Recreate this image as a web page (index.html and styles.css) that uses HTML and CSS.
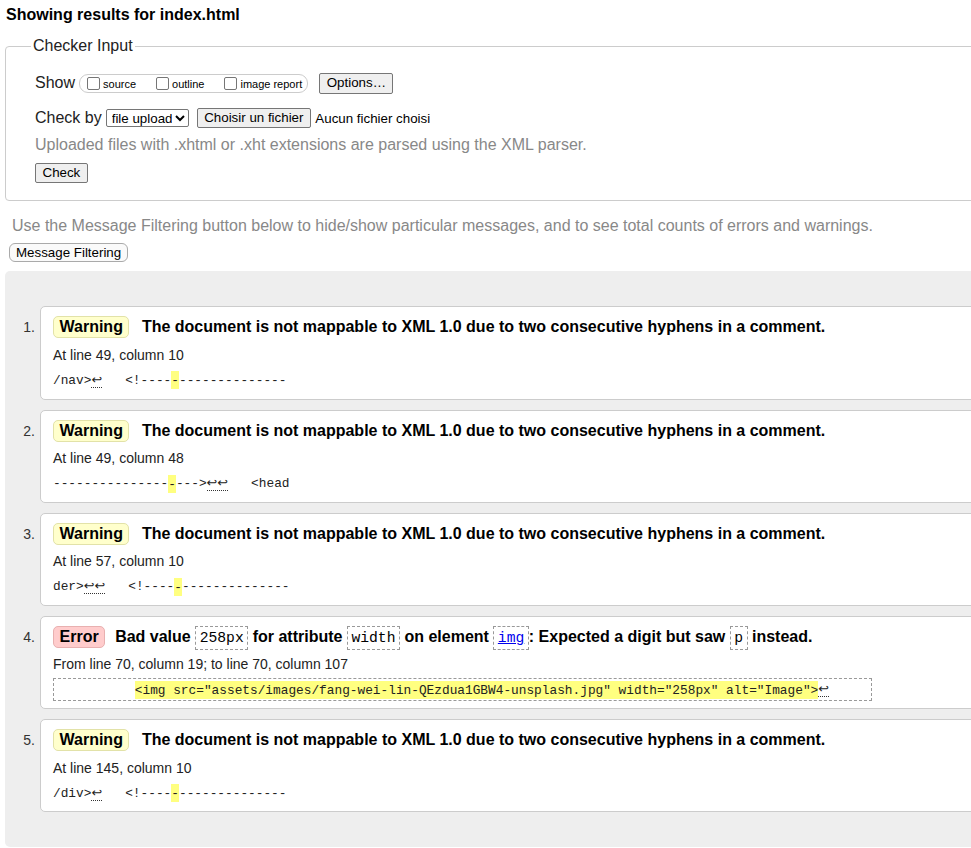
FILE: index.html
```html
<!DOCTYPE html>
<html lang="en">
<head>
<meta charset="utf-8">
<title>Showing results for index.html - Nu Html Checker</title>
<link rel="stylesheet" href="styles.css">
</head>
<body>
<div class="page">
  <h2 class="title">Showing results for index.html</h2>
  <form class="form">
    <fieldset class="input">
      <legend>Checker Input</legend>
      <div class="row row-show">
        <span class="lbl">Show</span>
        <span class="pill">
          <label class="cb"><input type="checkbox"><span>source</span></label>
          <label class="cb"><input type="checkbox"><span>outline</span></label>
          <label class="cb"><input type="checkbox"><span>image report</span></label>
        </span>
        <button type="button" class="btn opt">Options…</button>
      </div>
      <div class="row row-by">
        <span class="lbl">Check by</span>
        <select class="sel"><option>file upload</option></select>
        <button type="button" class="btn file">Choisir un fichier</button>
        <span class="nofile">Aucun fichier choisi</span>
      </div>
      <p class="hint">Uploaded files with .xhtml or .xht extensions are parsed using the XML parser.</p>
      <button type="button" class="btn check">Check</button>
    </fieldset>
  </form>
  <p class="hint filter-hint">Use the Message Filtering button below to hide/show particular messages, and to see total counts of errors and warnings.</p>
  <button type="button" class="filter-btn">Message Filtering</button>
  <div class="results">
    <ol class="msgs">
      <li class="item">
        <span class="num">1.</span>
        <div class="msg">
          <p class="head"><strong class="badge warn">Warning</strong>The document is not mappable to XML 1.0 due to two consecutive hyphens in a comment.</p>
          <p class="loc">At line 49, column 10</p>
          <div class="code">/nav&gt;<span class="lf">↩</span>   &lt;!----<mark>-</mark>--------------</div>
        </div>
      </li>
      <li class="item">
        <span class="num">2.</span>
        <div class="msg">
          <p class="head"><strong class="badge warn">Warning</strong>The document is not mappable to XML 1.0 due to two consecutive hyphens in a comment.</p>
          <p class="loc">At line 49, column 48</p>
          <div class="code">---------------<mark>-</mark>---&gt;<span class="lf">↩↩</span>   &lt;head</div>
        </div>
      </li>
      <li class="item">
        <span class="num">3.</span>
        <div class="msg">
          <p class="head"><strong class="badge warn">Warning</strong>The document is not mappable to XML 1.0 due to two consecutive hyphens in a comment.</p>
          <p class="loc">At line 57, column 10</p>
          <div class="code">der&gt;<span class="lf">↩↩</span>   &lt;!----<mark>-</mark>--------------</div>
        </div>
      </li>
      <li class="item">
        <span class="num">4.</span>
        <div class="msg">
          <p class="head"><strong class="badge err">Error</strong>Bad value <code class="ic">258px</code> for attribute <code class="ic">width</code> on element <code class="ic"><a href="#" class="elink">img</a></code>: Expected a digit but saw <code class="ic">p</code> instead.</p>
          <p class="loc">From line 70, column 19; to line 70, column 107</p>
          <div class="code"><span class="extract">          <mark>&lt;img src="assets/images/fang-wei-lin-QEzdua1GBW4-unsplash.jpg" width="258px" alt="Image"&gt;</mark><span class="lf">↩</span>     </span></div>
        </div>
      </li>
      <li class="item">
        <span class="num">5.</span>
        <div class="msg">
          <p class="head"><strong class="badge warn">Warning</strong>The document is not mappable to XML 1.0 due to two consecutive hyphens in a comment.</p>
          <p class="loc">At line 145, column 10</p>
          <div class="code">/div&gt;<span class="lf">↩</span>   &lt;!----<mark>-</mark>--------------</div>
        </div>
      </li>
    </ol>
  </div>
</div>
</body>
</html>
```

FILE: styles.css
```css
html {
  overflow: hidden;
}

body {
  margin: 0;
  font-family: "Liberation Sans", Arial, sans-serif;
  color: #000;
  background: #fff;
}

.page {
  width: 1040px;
  padding: 0 5px;
}

.title {
  margin: 6px 0 0;
  padding-left: 1px;
  font-size: 16px;
  line-height: normal;
  font-weight: bold;
}

.form {
  margin: 0;
}

.input {
  margin: 13px 0 0;
  padding: 0 0 17px 29px;
  border: 1px solid #ccc;
  border-radius: 4px;
  min-width: 0;
}

.input legend {
  padding: 0 2px;
  margin-left: -4px;
  font-size: 16px;
  line-height: normal;
  color: #222;
}

.row {
  display: flex;
  align-items: center;
}

.row-show {
  margin-top: 17.5px;
  height: 21px;
}

.row-by {
  margin-top: 14.5px;
  height: 20px;
}

.lbl {
  font-size: 16px;
  color: #222;
  margin-right: 4px;
}

.pill {
  display: inline-flex;
  align-items: center;
  height: 19px;
  box-sizing: border-box;
  padding: 0 5px 0 6.7px;
  border: 1px solid #ccc;
  border-radius: 9px;
}

.cb {
  display: inline-flex;
  align-items: center;
  font-size: 11px;
  color: #000;
}

.cb + .cb {
  margin-left: 19.7px;
}

.cb span {
  padding-top: 2px;
}

.cb input {
  appearance: none;
  -webkit-appearance: none;
  box-sizing: border-box;
  width: 13px;
  height: 13px;
  margin: 0 3.3px 0 0;
  border: 1px solid #767676;
  border-radius: 2px;
  background: #fff;
}

.btn {
  font-family: "Liberation Sans", Arial, sans-serif;
  font-size: 13.33px;
  line-height: 16px;
  padding: 1px 6.5px;
  border: 1px solid #767676;
  border-radius: 2px;
  background: #efefef;
  color: #000;
}

.opt {
  margin-left: 11px;
  padding-top: 1.5px;
  padding-bottom: 1.5px;
}

.sel {
  width: 83px;
  height: 18px;
  box-sizing: border-box;
  font-family: "Liberation Sans", Arial, sans-serif;
  font-size: 13.33px;
  padding: 0 0 0 1px;
  border: 1px solid #767676;
  border-radius: 2px;
  background: #fff;
  color: #000;
}

.file {
  margin-left: 8px;
}

.nofile {
  margin-left: 4.4px;
  font-size: 13.33px;
  color: #000;
}

.hint {
  font-size: 16px;
  line-height: normal;
  color: #888;
  margin: 8.3px 0 0;
}

.check {
  display: block;
  margin-top: 8.8px;
}

.filter-hint {
  margin: 15.8px 0 0 7px;
}

.filter-btn {
  display: block;
  margin: 7.8px 0 0 4px;
  font-family: "Liberation Sans", Arial, sans-serif;
  font-size: 13.33px;
  line-height: 17px;
  padding: 0 6px;
  border: 1px solid #aaa;
  border-radius: 6px;
  background: #fafafa;
  color: #000;
}

.results {
  margin-top: 9px;
  background: #eee;
  border-radius: 5px 0 0 5px;
  padding: 35.7px 0 35px;
}

.msgs {
  list-style: none;
  margin: 0;
  padding: 0;
}

.item {
  display: flex;
  align-items: baseline;
}

.item + .item {
  margin-top: 10px;
}

.num {
  flex: 0 0 35px;
  box-sizing: border-box;
  padding-right: 5px;
  text-align: right;
  font-size: 14px;
  color: #333;
}

.msg {
  flex: 1;
  background: #fff;
  border: 1px solid #ccc;
  border-radius: 5px;
  padding: 9px 12px 7.7px;
}

.head {
  margin: 0;
  font-size: 16px;
  font-weight: bold;
  line-height: 22px;
}

.badge {
  display: inline-block;
  line-height: 18px;
  padding: 1px 5.5px;
  border: 1px solid;
  border-radius: 5px;
  margin-right: 12.5px;
}

.warn {
  background: #ffffcc;
  border-color: #e2e2a8;
}

.err {
  background: #ffcccc;
  border-color: #e8b0b0;
  margin-right: 10px;
}

.ic {
  font-family: "Liberation Mono", "DejaVu Sans Mono", monospace;
  font-size: 14.7px;
  font-weight: normal;
  line-height: 16px;
  padding: 3px 3.5px;
  border: 1px dashed #999;
}

.elink {
  color: #00e;
  text-decoration: underline;
}

.loc {
  margin: 8.5px 0 0;
  font-size: 14px;
  line-height: 16px;
  color: #222;
}

.code {
  margin-top: 7px;
  font-family: "Liberation Mono", "DejaVu Sans Mono", monospace;
  font-size: 12.8px;
  line-height: 20px;
  white-space: pre;
  color: #222;
}

.code mark {
  background: #ffff80;
  color: inherit;
  padding: 1.5px 0;
}

.lf {
  font-family: "DejaVu Sans", sans-serif;
  border-bottom: 1px dotted #333;
}

.extract {
  display: inline-block;
  vertical-align: top;
  margin: -1px 0;
  line-height: 18px;
  padding: 1px 4px;
  border: 1px dashed #999;
}
```
